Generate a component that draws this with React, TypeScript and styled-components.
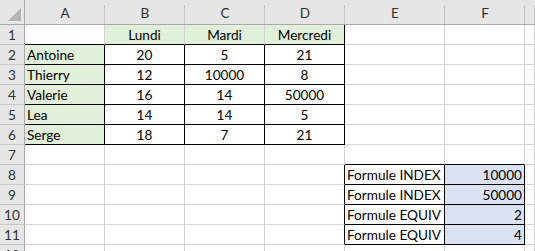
import React from 'react'
import type { ReactElement } from 'react'
import styled, { createGlobalStyle } from 'styled-components'

const GlobalStyle = createGlobalStyle`
    html, body {
        margin: 0;
        padding: 0;
        background: #ffffff;
        overflow: hidden;
    }
`

const GRID = '#d4d4d4'
const BLACK = '#000000'
const GREEN = '#e2efda'
const BLUE = '#d9e1f2'

const COLUMNS = ['A', 'B', 'C', 'D', 'E', 'F', '']

type Align = 'left' | 'center' | 'right'

// each row: values for A..F
const ROWS: string[][] = [
    ['', 'Lundi', 'Mardi', 'Mercredi', '', ''],
    ['Antoine', '20', '5', '21', '', ''],
    ['Thierry', '12', '10000', '8', '', ''],
    ['Valerie', '16', '14', '50000', '', ''],
    ['Lea', '14', '14', '5', '', ''],
    ['Serge', '18', '7', '21', '', ''],
    ['', '', '', '', '', ''],
    ['', '', '', '', 'Formule INDEX', '10000'],
    ['', '', '', '', 'Formule INDEX', '50000'],
    ['', '', '', '', 'Formule EQUIV', '2'],
    ['', '', '', '', 'Formule EQUIV', '4'],
    ['', '', '', '', '', ''],
]

const inBox = (r: number, c: number): boolean =>
    (r >= 2 && r <= 6 && c >= 0 && c <= 3) ||
    (r >= 8 && r <= 11 && c >= 4 && c <= 5)

const fillOf = (r: number, c: number): string => {
    if ((c === 0 && r >= 2 && r <= 6) || (r === 1 && c >= 1 && c <= 3)) return GREEN
    if (c === 5 && r >= 8 && r <= 11) return BLUE
    return '#ffffff'
}

const alignOf = (r: number, c: number): Align => {
    if (c === 0 || c === 4) return 'left'
    if (c === 5) return 'right'
    return 'center'
}

const Sheet = styled.div`
    display: grid;
    grid-template-columns: 25px 80px 80px 80px 80px 100px 80px 1fr;
    grid-template-rows: 25px repeat(12, 20px);
    width: 535px;
    height: 251px;
    overflow: hidden;
    font-family: Lato, "Liberation Sans", sans-serif;
    font-size: 13.6px;
    color: #000000;
`

const Corner = styled.div`
    box-sizing: border-box;
    background: #e6e6e6;
    border-right: 1px solid #ababab;
    border-bottom: 1px solid #ababab;
    display: flex;
    align-items: flex-end;
    justify-content: flex-end;
    padding: 0 3px 3px 0;
`

const ColHead = styled.div`
    box-sizing: border-box;
    background:
        linear-gradient(#c8c8c8, #c8c8c8) right bottom / 1px 19px no-repeat,
        #e6e6e6;
    border-bottom: 1px solid #ababab;
    display: flex;
    align-items: center;
    justify-content: center;
    padding-top: 2px;
    color: #333333;
`

const RowHead = styled.div`
    box-sizing: border-box;
    background: #e6e6e6;
    border-right: 1px solid #ababab;
    border-bottom: 1px solid #c8c8c8;
    display: flex;
    align-items: center;
    justify-content: center;
    padding-top: 1px;
    color: #333333;
`

const Cell = styled.div<{ $fill: string; $right: string; $bottom: string; $align: Align }>`
    box-sizing: border-box;
    background: ${p => p.$fill};
    border-right: 1px solid ${p => p.$right};
    border-bottom: 1px solid ${p => p.$bottom};
    display: flex;
    align-items: center;
    justify-content: ${p => p.$align === 'left' ? 'flex-start' : p.$align === 'right' ? 'flex-end' : 'center'};
    padding: 1px 2px 0 2px;
    white-space: nowrap;
    overflow: hidden;
`

const Triangle = () => (
    <svg width="13" height="13" viewBox="0 0 13 13">
        <polygon points="13,0 13,13 0,13" fill="#b4b4b4" />
    </svg>
)

export default function App(): ReactElement {
    return (
        <>
            <GlobalStyle />
            <Sheet>
                <Corner><Triangle /></Corner>
                {COLUMNS.map((name, i) => <ColHead key={i}>{name}</ColHead>)}

                {ROWS.map((row, r0) => {
                    const r = r0 + 1
                    return (
                        <React.Fragment key={r}>
                            <RowHead>{r}</RowHead>
                            {[...row, ''].map((v, c) => (
                                <Cell
                                    key={c}
                                    $fill={fillOf(r, c)}
                                    $align={alignOf(r, c)}
                                    $right={inBox(r, c) || inBox(r, c + 1) || (r === 1 && c === 3) ? BLACK : GRID}
                                    $bottom={inBox(r, c) || inBox(r + 1, c) ? BLACK : GRID}
                                >
                                    {v}
                                </Cell>
                            ))}
                        </React.Fragment>
                    )
                })}
            </Sheet>
        </>
    )
}
